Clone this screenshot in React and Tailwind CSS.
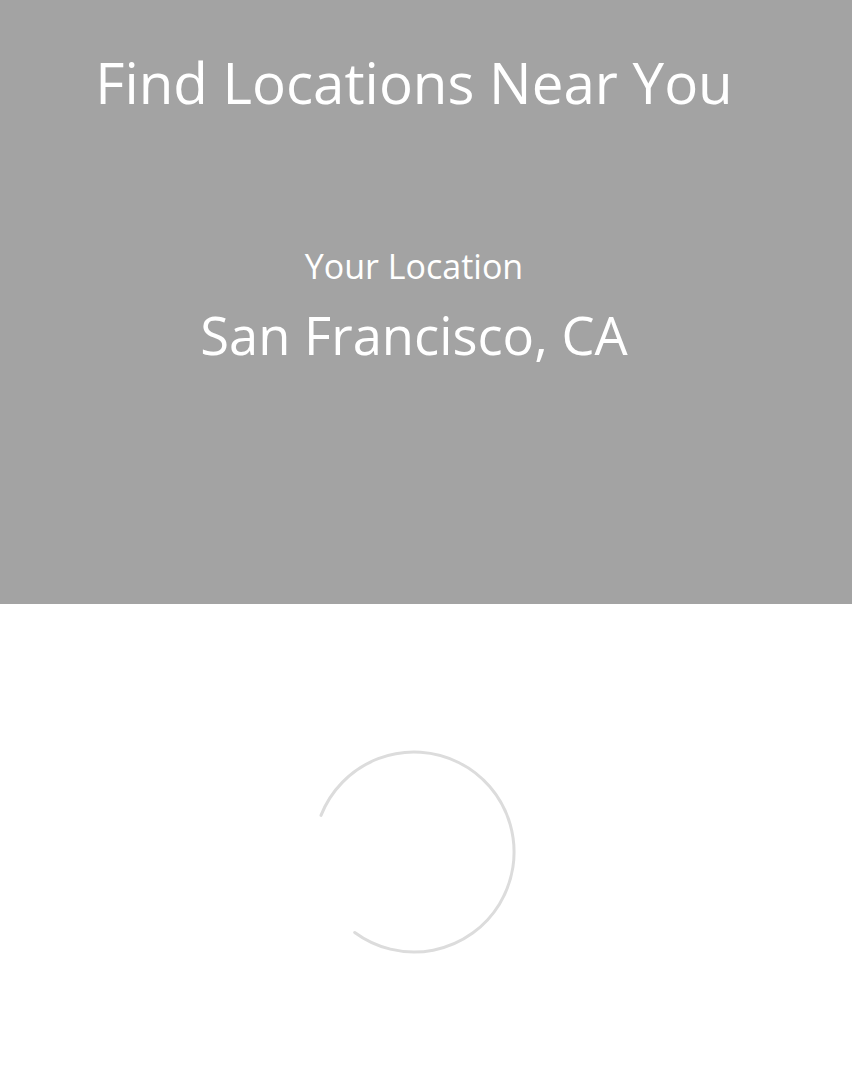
import React from "react";

const Spinner = () => (
  <svg width="206" height="206" viewBox="0 0 206 206" className="block">
    <path
      d="M 10 66.4 A 100 100 0 1 1 43.7 183.5"
      fill="none"
      stroke="#dcdcdc"
      strokeWidth="3"
      strokeLinecap="round"
    />
  </svg>
);

export default function App() {
  return (
    <div className="min-h-screen bg-white font-['Open_Sans',sans-serif] pr-[24px]">
      <section className="h-[604px] bg-[#a3a3a3] text-white flex flex-col items-center -mr-[24px] pr-[24px]">
        <h1 className="mt-[55px] text-[56.5px] leading-none font-normal">Find Locations Near You</h1>
        <div className="mt-[137px] text-[34px] leading-none">Your Location</div>
        <div className="mt-[26px] text-[52.5px] leading-none">San Francisco, CA</div>
      </section>
      <div className="flex justify-center pt-[145px]">
        <Spinner />
      </div>
    </div>
  );
}
